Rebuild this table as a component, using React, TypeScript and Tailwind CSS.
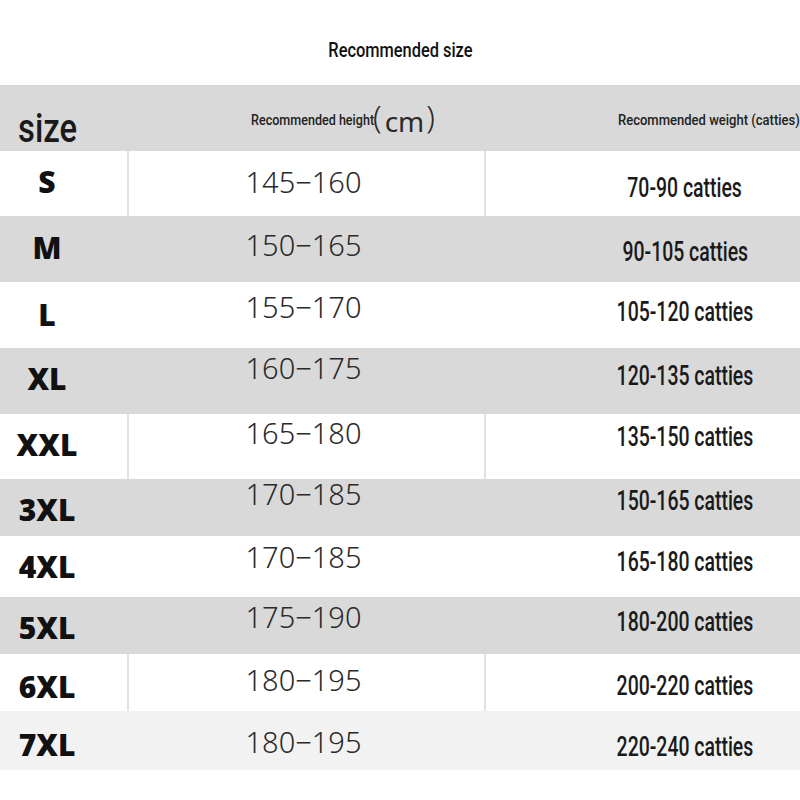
import React from "react";

type Row = {
  size: string;
  h: string;
  w: string;
  bg: string;
  rh: string;
  line: boolean;
  sp: string;
  hp: string;
  wp: string;
};

const rows: Row[] = [
  { size: "S", h: "145−160", w: "70-90 catties", bg: "bg-white", rh: "h-[65px]", line: true, sp: "pt-[16px]", hp: "pt-[16px]", wp: "pt-[24px]" },
  { size: "M", h: "150−165", w: "90-105 catties", bg: "bg-[#d9d9d9]", rh: "h-[66px]", line: false, sp: "pt-[17px]", hp: "pt-[14px]", wp: "pt-[23px]" },
  { size: "L", h: "155−170", w: "105-120 catties", bg: "bg-white", rh: "h-[66px]", line: false, sp: "pt-[18px]", hp: "pt-[10px]", wp: "pt-[17px]" },
  { size: "XL", h: "160−175", w: "120-135 catties", bg: "bg-[#d9d9d9]", rh: "h-[66px]", line: false, sp: "pt-[16px]", hp: "pt-[5px]", wp: "pt-[15px]" },
  { size: "XXL", h: "165−180", w: "135-150 catties", bg: "bg-white", rh: "h-[65px]", line: true, sp: "pt-[16px]", hp: "pt-[4px]", wp: "pt-[10px]" },
  { size: "3XL", h: "170−185", w: "150-165 catties", bg: "bg-[#d9d9d9]", rh: "h-[57px]", line: false, sp: "pt-[16px]", hp: "pt-0", wp: "pt-[9px]" },
  { size: "4XL", h: "170−185", w: "165-180 catties", bg: "bg-white", rh: "h-[61px]", line: false, sp: "pt-[16px]", hp: "pt-[6px]", wp: "pt-[13px]" },
  { size: "5XL", h: "175−190", w: "180-200 catties", bg: "bg-[#d9d9d9]", rh: "h-[57px]", line: false, sp: "pt-[16px]", hp: "pt-[5px]", wp: "pt-[12px]" },
  { size: "6XL", h: "180−195", w: "200-220 catties", bg: "bg-white", rh: "h-[57px]", line: true, sp: "pt-[18px]", hp: "pt-[11px]", wp: "pt-[19px]" },
  { size: "7XL", h: "180−195", w: "220-240 catties", bg: "bg-[#f2f2f2]", rh: "h-[59px]", line: false, sp: "pt-[19px]", hp: "pt-[16px]", wp: "pt-[23px]" },
];

export default function App() {
  return (
    <div className="w-[800px] h-[800px] bg-white overflow-hidden">
      <div className="h-[85px] pt-[40px] flex justify-center items-start">
        <span className="inline-block whitespace-nowrap origin-center scale-x-[0.78] font-['Roboto',sans-serif] font-medium text-[21px] leading-none text-[#111]">
          Recommended size
        </span>
      </div>

      <div className="w-[886px]">
        {/* header */}
        <div className="flex h-[66px] bg-[#d9d9d9]">
          <div className="w-[127px] pl-[18px] pt-[24px] flex items-start">
            <span className="inline-block whitespace-nowrap origin-left scale-x-[0.82] font-['Roboto',sans-serif] font-medium text-[40px] leading-none text-[#1a1a1a]">
              size
            </span>
          </div>
          <div className="w-[2px]" />
          <div className="w-[355px] pl-[122px] flex items-start">
            <span className="mt-[28px] inline-block w-[122px] whitespace-nowrap origin-left scale-x-[0.81] font-['Roboto',sans-serif] font-medium text-[15.5px] leading-none text-[#222]">
              Recommended height
            </span>
            <span className="mt-[16px] font-['Noto_Sans',sans-serif] font-light text-[31px] leading-none text-[#2a2a2a]">
              (
            </span>
            <span className="mt-[22px] ml-[3px] font-['Noto_Sans',sans-serif] font-normal text-[28px] leading-none text-[#2a2a2a] whitespace-nowrap">
              cm
            </span>
            <span className="mt-[16px] ml-[2px] font-['Noto_Sans',sans-serif] font-light text-[31px] leading-none text-[#2a2a2a]">
              )
            </span>
          </div>
          <div className="w-[2px]" />
          <div className="w-[398px] pl-[132px] pt-[28px] flex items-start">
            <span className="inline-block whitespace-nowrap origin-left scale-x-[0.84] font-['Roboto',sans-serif] font-medium text-[15.5px] leading-none text-[#222]">
              Recommended weight (catties)
            </span>
          </div>
        </div>

        {rows.map((r) => (
          <div key={r.size} className={`flex ${r.rh} ${r.bg}`}>
            <div className={`w-[127px] ${r.sp}`}>
              <div className="w-[94px] text-center font-['Open_Sans',sans-serif] font-extrabold text-[30px] leading-none text-[#111]">
                {r.size}
              </div>
            </div>
            <div className={r.line ? "w-[2px] bg-[#e2e2e2]" : "w-[2px]"} />
            <div className={`w-[355px] pr-[6px] text-center ${r.hp}`}>
              <span className="font-['Noto_Sans',sans-serif] font-light text-[29px] leading-none text-[#2a2a2a] whitespace-nowrap">
                {r.h}
              </span>
            </div>
            <div className={r.line ? "w-[2px] bg-[#e2e2e2]" : "w-[2px]"} />
            <div className={`w-[398px] text-center ${r.wp}`}>
              <span className="inline-block whitespace-nowrap origin-center scale-x-[0.72] font-['Roboto',sans-serif] font-medium text-[27px] leading-none text-[#1a1a1a]">
                {r.w}
              </span>
            </div>
          </div>
        ))}
      </div>
    </div>
  );
}
